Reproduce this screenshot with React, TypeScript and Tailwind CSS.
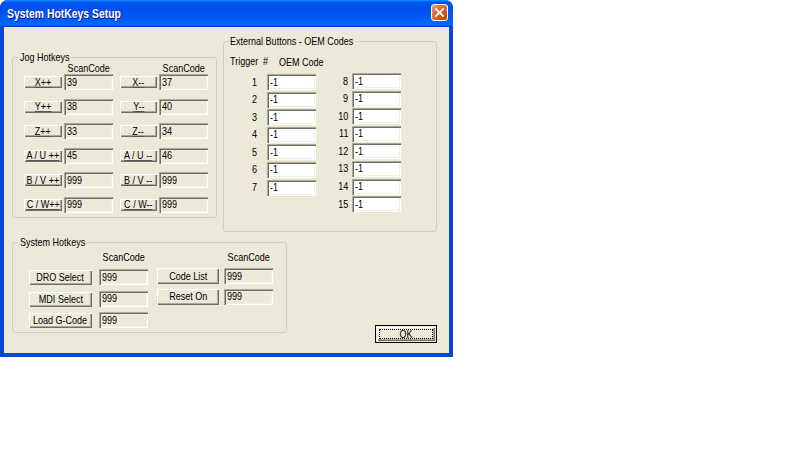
import React from 'react';

const SUNKEN =
  'shadow-[inset_1px_1px_0_#ACA899,inset_2px_2px_0_#716F64,inset_-1px_-1px_0_#ffffff,inset_-2px_-2px_0_#F1EFE2]';
const RAISED =
  'shadow-[inset_1px_1px_0_#ffffff,inset_-1px_-1px_0_#716F64,inset_-2px_-2px_0_#ACA899]';

const jogRows = [
  ['X++', '39', 'X--', '37'],
  ['Y++', '38', 'Y--', '40'],
  ['Z++', '33', 'Z--', '34'],
  ['A / U ++', '45', 'A / U --', '46'],
  ['B / V ++', '999', 'B / V --', '999'],
  ['C / W++', '999', 'C / W--', '999'],
];

// the dialog font is a narrow sans; Liberation Sans squeezed to match its widths
const T = ({ children, o = 'left', className = '' }: { children: React.ReactNode; o?: 'left' | 'right' | 'center'; className?: string }) => (
  <span
    className={`inline-block whitespace-nowrap scale-x-[0.82] ${
      o === 'left' ? 'origin-left' : o === 'right' ? 'origin-right' : 'origin-center'
    } ${className}`}
  >
    {children}
  </span>
);

const Field = ({ value, white = false, className = '' }: { value: string; white?: boolean; className?: string }) => (
  <div className={`h-[16px] w-[49px] shrink-0 flex items-center pl-[3px] ${white ? 'bg-white' : 'bg-[#ECE9D8]'} ${SUNKEN} ${className}`}>
    <T>{value}</T>
  </div>
);

const JogButton = ({ label, className = '' }: { label: string; className?: string }) => (
  <div className={`h-[12px] mt-[2px] shrink-0 flex items-center justify-center bg-[#ECE9D8] ${RAISED} ${className}`}>
    <T o="center" className="underline decoration-[#555] underline-offset-[1px]">
      {label}
    </T>
  </div>
);

const SysButton = ({ label, className = '' }: { label: string; className?: string }) => (
  <div className={`shrink-0 flex items-center justify-center bg-[#ECE9D8] ${RAISED} ${className}`}>
    <T o="center">{label}</T>
  </div>
);

const Header = ({ className = '' }: { className?: string }) => (
  <div className={`w-[49px] flex justify-center ${className}`}>
    <T o="center">ScanCode</T>
  </div>
);

const App = () => {
  return (
    <div className="w-[800px] h-[450px] bg-white font-['Liberation_Sans',Arial,sans-serif] text-[11px] leading-[11px] text-black">
      <div className="w-[453px] h-[357px] flex flex-col bg-[#0A46D8] rounded-t-[8px] overflow-hidden">
        {/* Title bar */}
        <div className="h-[27px] shrink-0 flex items-start justify-between pl-[7px] pr-[5px] bg-[linear-gradient(180deg,#0997FF,#0053EE_8%,#0050EE_40%,#0066FF_88%,#0066FF_93%,#005BFF_95%,#003DD7_96%,#003DD7)]">
          <span className="mt-[7px] inline-block whitespace-nowrap origin-left scale-x-[0.8] text-white font-bold text-[13px] leading-[13px] [text-shadow:1px_1px_0_#0F1089]">
            System HotKeys Setup
          </span>
          <div className="mt-[4px] w-[17px] h-[17px] rounded-[3px] border border-white bg-[radial-gradient(circle_at_90%_90%,#CC4600_0%,#DC6527_55%,#F0A080_100%)] flex items-center justify-center">
            <svg width="9" height="9" viewBox="0 0 9 9">
              <path d="M1 1L8 8M8 1L1 8" stroke="white" strokeWidth="1.8" strokeLinecap="square" />
            </svg>
          </div>
        </div>

        {/* Client area */}
        <div className="flex-1 mx-[4px] mb-[4px] bg-[#ECE9D8] flex flex-col pl-[8px] pt-[8px]">
          <div className="flex items-start">
            {/* Jog Hotkeys */}
            <fieldset className="mt-[16px] w-[205px] h-[167px] border border-[#D0D0BF] rounded-[3px]">
              <legend className="ml-[5px] w-[54px] px-[2px] leading-[12px]">
                <T>Jog Hotkeys</T>
              </legend>
              <div className="pl-[11px]">
                <div className="flex h-[11px]">
                  <div className="w-[40px]" />
                  <Header />
                  <div className="w-[46px]" />
                  <Header />
                </div>
                <div className="flex flex-col gap-[8.5px]">
                  {jogRows.map(([a, av, b, bv]) => (
                    <div key={a} className="flex items-start h-[16px]">
                      <JogButton label={a} className="w-[38px]" />
                      <Field value={av} className="ml-[2px]" />
                      <JogButton label={b} className="w-[37px] ml-[7px]" />
                      <Field value={bv} className="ml-[2px]" />
                    </div>
                  ))}
                </div>
              </div>
            </fieldset>

            {/* External Buttons */}
            <fieldset className="ml-[6px] w-[214px] h-[197px] border border-[#D0D0BF] rounded-[3px]">
              <legend className="ml-[4px] w-[127px] px-[2px] leading-[12px]">
                <T>External Buttons - OEM Codes</T>
              </legend>
              <div className="pl-[3px] pt-[9px]">
                <div className="flex h-[11px] pl-[3px]">
                  <span className="w-[33px]">
                    <T>Trigger</T>
                  </span>
                  <span className="w-[16px]">
                    <T>#</T>
                  </span>
                  <span className="mt-[1px]">
                    <T>OEM Code</T>
                  </span>
                </div>
                <div className="flex items-start">
                  <div className="flex flex-col gap-[1.6px] mt-[7px]">
                    {['1', '2', '3', '4', '5', '6', '7'].map((n) => (
                      <div key={n} className="flex items-center">
                        <span className="w-[30px] text-right">
                          <T o="right">{n}</T>
                        </span>
                        <Field value="-1" white className="ml-[10px]" />
                      </div>
                    ))}
                  </div>
                  <div className="flex flex-col gap-[1.6px] mt-[6px]">
                    {['8', '9', '10', '11', '12', '13', '14', '15'].map((n) => (
                      <div key={n} className="flex items-center">
                        <span className="ml-[2px] w-[30px] text-right">
                          <T o="right">{n}</T>
                        </span>
                        <Field value="-1" white className="ml-[4px]" />
                      </div>
                    ))}
                  </div>
                </div>
              </div>
            </fieldset>
          </div>

          <div className="flex items-start">
            {/* System Hotkeys */}
            <fieldset className="mt-[4px] w-[275px] h-[97px] border border-[#D0D0BF] rounded-[3px]">
              <legend className="ml-[5px] w-[69px] px-[2px] leading-[12px]">
                <T>System Hotkeys</T>
              </legend>
              <div className="flex items-start pl-[16px] pt-[4px]">
                <div className="flex flex-col">
                  <div className="flex h-[11px]">
                    <div className="w-[70px]" />
                    <Header />
                  </div>
                  <div className="flex flex-col gap-[5.5px] mt-[6px]">
                    {[
                      ['DRO Select', '999'],
                      ['MDI Select', '999'],
                      ['Load G-Code', '999'],
                    ].map(([l, v]) => (
                      <div key={l} className="flex items-end h-[16px]">
                        <SysButton label={l} className="w-[63px] h-[15px]" />
                        <Field value={v} className="ml-[7px]" />
                      </div>
                    ))}
                  </div>
                </div>
                <div className="flex flex-col ml-[9px]">
                  <div className="flex h-[11px]">
                    <div className="w-[67px]" />
                    <Header />
                  </div>
                  <div className="flex flex-col gap-[4.5px] mt-[5px]">
                    {[
                      ['Code List', '999'],
                      ['Reset On', '999'],
                    ].map(([l, v]) => (
                      <div key={l} className="flex items-start h-[16px]">
                        <SysButton label={l} className="w-[62px] h-[16px]" />
                        <Field value={v} className="ml-[5px]" />
                      </div>
                    ))}
                  </div>
                </div>
              </div>
            </fieldset>

            {/* OK */}
            <div className="ml-[88px] mt-[93px] w-[62px] h-[18px] border border-black bg-[#ECE9D8] p-[1px]">
              <div className={`w-full h-full p-[2px] ${RAISED}`}>
                <div className="w-full h-full border border-dotted border-black flex items-center justify-center">
                  <T o="center">OK</T>
                </div>
              </div>
            </div>
          </div>
        </div>
      </div>
    </div>
  );
};

export default App;
